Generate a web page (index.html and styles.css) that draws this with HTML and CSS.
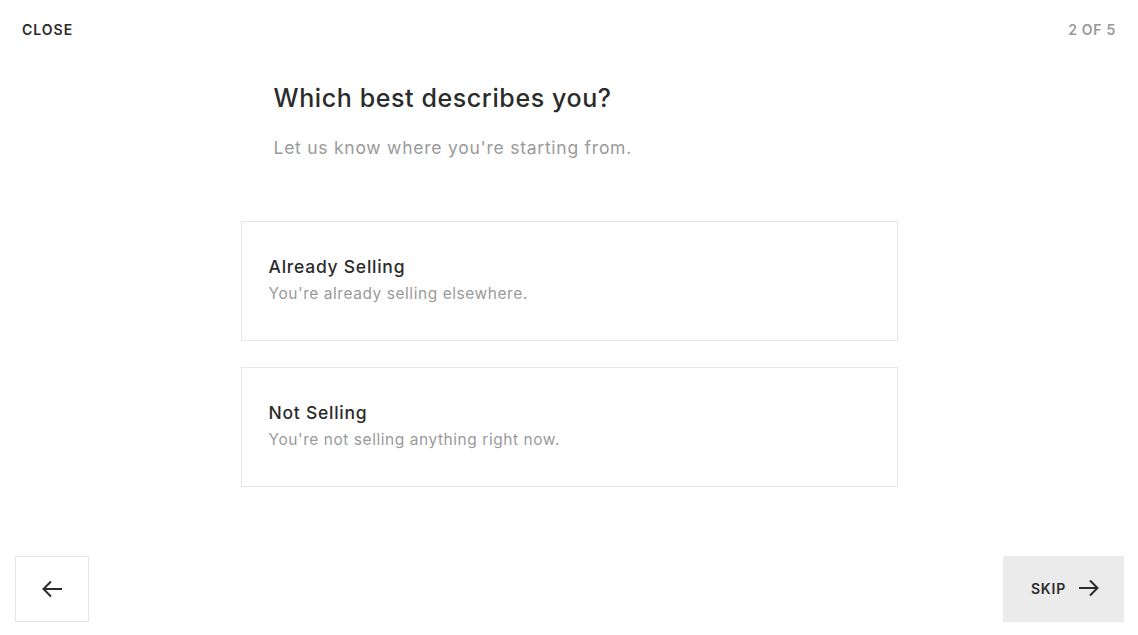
FILE: index.html
```html
<!DOCTYPE html>
<html lang="en">
<head>
<meta charset="utf-8">
<title>Which best describes you?</title>
<link rel="stylesheet" href="styles.css">
</head>
<body>
<div class="page">
  <header class="topbar">
    <span class="close">CLOSE</span>
    <span class="step">2 OF 5</span>
  </header>
  <main class="content">
    <div class="intro">
      <h1 class="title">Which best describes you?</h1>
      <p class="subtitle">Let us know where you're starting from.</p>
    </div>
    <div class="options">
      <div class="option">
        <div class="option-title">Already Selling</div>
        <div class="option-desc">You're already selling elsewhere.</div>
      </div>
      <div class="option">
        <div class="option-title">Not Selling</div>
        <div class="option-desc">You're not selling anything right now.</div>
      </div>
    </div>
  </main>
  <footer class="footer">
    <button class="back" aria-label="Back">
      <svg width="22" height="18" viewBox="0 0 22 18" fill="none" stroke="#2b2b2b" stroke-width="2">
        <path d="M21 9H2.5"/>
        <path d="M10 1.5L2.5 9L10 16.5"/>
      </svg>
    </button>
    <button class="skip">
      <span>SKIP</span>
      <svg width="22" height="18" viewBox="0 0 22 18" fill="none" stroke="#2b2b2b" stroke-width="2">
        <path d="M1 9H19.5"/>
        <path d="M12 1.5L19.5 9L12 16.5"/>
      </svg>
    </button>
  </footer>
</div>
</body>
</html>
```
FILE: styles.css
```css
* { box-sizing: border-box; }
html, body { margin: 0; padding: 0; background: #fff; }
body {
  font-family: Inter, "Liberation Sans", sans-serif;
  color: #2b2b2b;
}
.page {
  width: 1138px;
  height: 635px;
  display: flex;
  flex-direction: column;
}
.topbar {
  display: flex;
  justify-content: space-between;
  align-items: center;
  padding: 19px 22px 0 22px;
  height: 40px;
}
.close {
  font-size: 14px;
  font-weight: 600;
  letter-spacing: 1px;
  color: #2b2b2b;
}
.step {
  font-size: 14px;
  font-weight: 600;
  letter-spacing: 0.7px;
  color: #9a9a9a;
}
.content {
  flex: 1;
  display: flex;
  flex-direction: column;
  align-items: center;
}
.intro {
  width: 657px;
  padding: 41px 33px 0;
}
.title {
  margin: 0;
  font-size: 25px;
  font-weight: 500;
  line-height: 34px;
  letter-spacing: 0.6px;
  color: #2b2b2b;
}
.subtitle {
  margin: 20px 0 0;
  font-size: 17.5px;
  line-height: 26px;
  font-weight: 400;
  letter-spacing: 0.75px;
  color: #9a9a9a;
}
.options {
  width: 657px;
  margin-top: 60px;
  display: flex;
  flex-direction: column;
  gap: 26px;
}
.option {
  height: 120px;
  border: 1px solid #e6e6e6;
  padding: 33px 27px 0;
}
.option-title {
  font-size: 17.5px;
  font-weight: 500;
  line-height: 24px;
  letter-spacing: 0.75px;
  color: #2b2b2b;
}
.option-desc {
  margin-top: 4px;
  font-size: 15.5px;
  line-height: 22px;
  letter-spacing: 0.55px;
  color: #9a9a9a;
}
.footer {
  display: flex;
  justify-content: space-between;
  align-items: flex-end;
  padding: 0 14px 13px 15px;
}
.back {
  width: 74px;
  height: 66px;
  border: 1px solid #e6e6e6;
  background: #fff;
  display: flex;
  align-items: center;
  justify-content: center;
  padding: 0;
  cursor: pointer;
}
.skip {
  width: 121px;
  height: 66px;
  border: none;
  background: #ebebeb;
  display: flex;
  align-items: center;
  justify-content: center;
  gap: 12px;
  padding: 0 0 2px 4px;
  font-family: Inter, "Liberation Sans", sans-serif;
  font-size: 14px;
  font-weight: 600;
  letter-spacing: 0.8px;
  color: #2b2b2b;
  cursor: pointer;
}
```
